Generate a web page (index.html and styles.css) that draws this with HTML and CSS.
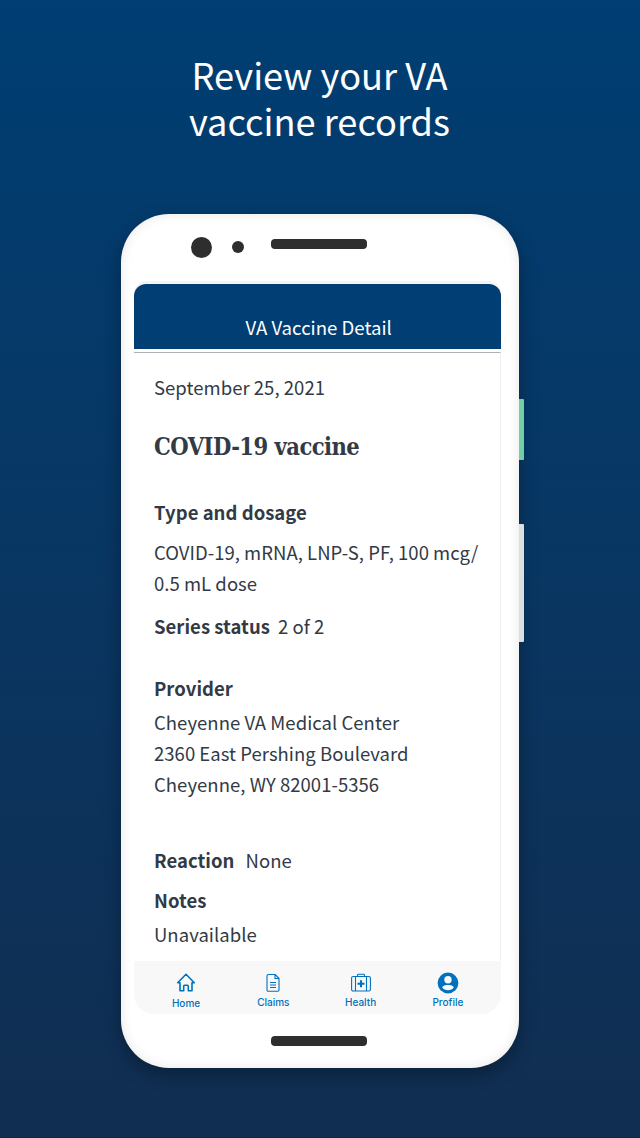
FILE: index.html
```html
<!DOCTYPE html>
<html lang="en">
<head>
<meta charset="utf-8">
<title>VA Vaccine Detail</title>
<link rel="stylesheet" href="styles.css">
</head>
<body>
<main class="poster">
  <h1 class="headline">Review your VA<br>vaccine records</h1>
  <div class="phone">
    <i class="side-button power"></i>
    <i class="side-button volume"></i>
    <div class="sensors"><i class="camera"></i><i class="sensor"></i><i class="speaker"></i></div>
    <section class="screen">
      <header class="app-bar">VA Vaccine Detail</header>
      <article class="record">
        <p class="date">September 25, 2021</p>
        <h2 class="vaccine">COVID-19 vaccine</h2>
        <h3 class="label type">Type and dosage</h3>
        <p class="dosage">COVID-19, mRNA, LNP-S, PF, 100 mcg/<br>0.5 mL dose</p>
        <p class="series"><b class="label">Series status</b><span>2 of 2</span></p>
        <h3 class="label provider">Provider</h3>
        <p class="address">Cheyenne VA Medical Center<br>2360 East Pershing Boulevard<br>Cheyenne, WY 82001-5356</p>
        <p class="reaction"><b class="label">Reaction</b><span>None</span></p>
        <h3 class="label notes">Notes</h3>
        <p class="note-text">Unavailable</p>
      </article>
      <nav class="tabs">
        <a class="tab home">
          <svg width="20" height="20" viewBox="0 0 20 20" fill="none" stroke="currentColor" stroke-width="1.6" stroke-linejoin="round" stroke-linecap="round"><path d="M4 9.700H1.700L10 1.300l8.300 8.400H16v8.100h-3.700v-4.600a1 1 0 0 0-1-1H8.700a1 1 0 0 0-1 1v4.600H4z"/></svg>
          <span>Home</span>
        </a>
        <a class="tab">
          <svg width="20" height="20" viewBox="0 0 20 20" fill="none" stroke="currentColor" stroke-width="1.1"><path d="M5.500 1.500h6.700l3.800 3.800v11.700a1.200 1.200 0 0 1-1.200 1.200H5.200A1.200 1.200 0 0 1 4 17V3a1.500 1.500 0 0 1 1.500-1.500zM12 1.700v3.800h3.800M7 9.500h6M7 12h6M7 14.500h6"/></svg>
          <span>Claims</span>
        </a>
        <a class="tab">
          <svg width="20" height="20" viewBox="0 0 20 20" fill="none" stroke="currentColor" stroke-width="1.1"><rect x=".6" y="3.500" width="18.800" height="14.500" rx="1.500"/><path d="M4.500 3.500V18M15.500 3.500V18M6.500 3.500V2.200c0-.5.400-.9.900-.9h5.200c.5 0 .9.400.9.900v1.300"/><path d="M10 7.200v7M6.500 10.700h7" stroke-width="2.100"/></svg>
          <span>Health</span>
        </a>
        <a class="tab">
          <svg class="profile-icon" width="22" height="22" viewBox="0 0 22 22"><circle cx="11" cy="11" r="10.400" fill="currentColor"/><circle cx="11" cy="7.800" r="3.700" fill="#f8f8f8"/><path d="M5.200 15.600c.6-2 3.200-2.600 5.800-2.600s5.200.6 5.800 2.600c-1.300 1.700-3.400 2.700-5.800 2.700s-4.500-1-5.800-2.700z" fill="#f8f8f8"/></svg>
          <span>Profile</span>
        </a>
      </nav>
    </section>
    <i class="speaker bottom"></i>
  </div>
</main>
</body>
</html>
```
FILE: styles.css
```css
* { box-sizing: border-box; }
body { margin: 0; }
h1, h2, h3, p { margin: 0; }

.poster {
  height: 1138px;
  display: flex;
  flex-direction: column;
  align-items: center;
  overflow: hidden;
  background: linear-gradient(#003e73, #112e51);
  border-bottom: 1px solid #0d2743;
  font-family: "Noto Sans CJK SC", "Noto Sans", sans-serif;
}
.headline {
  margin-top: 51px;
  padding-right: 1px;
  color: #fff;
  font-size: 36.200px;
  line-height: 46px;
  font-weight: 400;
  text-align: center;
}
.phone {
  position: relative;
  width: 398px;
  height: 854px;
  flex: none;
  margin-top: 71px;
  padding: 0 18px 0 13.400px;
  display: flex;
  flex-direction: column;
  border-radius: 48px;
  background: #fff;
  box-shadow: inset 0 0 12px rgba(0, 0, 0, .1), 0 7px 16px rgba(5, 20, 35, .5);
}
.side-button {
  position: absolute;
  left: 398px;
  width: 5px;
  border-radius: 0 1px 1px 0;
}
.power { top: 185px; height: 61px; background: #71cfa8; }
.volume { top: 310px; height: 118px; background: #dcdfe0; }

.sensors { height: 70px; padding: 22.500px 0 0 56.600px; display: flex; align-items: flex-start; }
.camera, .sensor, .speaker { background: #2e2e2e; }
.camera { width: 21px; height: 21px; border-radius: 50%; }
.sensor { width: 12px; height: 12px; border-radius: 50%; margin: 4.500px 0 0 20px; }
.sensors .speaker { margin: 2.500px 0 0 27px; }
.speaker { width: 96px; height: 9.500px; border-radius: 4px; }
.speaker.bottom { margin: 22px 0 0 136.600px; }

.screen {
  width: 366.600px;
  height: 730px;
  display: flex;
  flex-direction: column;
  border-radius: 12px 12px 20px 20px;
  overflow: hidden;
  background: #fff;
  box-shadow: 0 -3px 0 #f4f4f4;
}
.app-bar {
  height: 65.400px;
  flex: none;
  padding-top: 27px;
  padding-left: 2px;
  background: #003e73;
  color: #fff;
  font-size: 18.600px;
  line-height: 31px;
  text-align: center;
}
.record {
  height: 609px;
  flex: none;
  margin-top: 2.600px;
  padding: 19px 0 0 19.600px;
  border-top: 1px solid #aeb0b5;
  border-right: 1px solid #f0f0f0;
  color: #323a45;
  font-size: 18.500px;
  letter-spacing: .035px;
  line-height: 31px;
  white-space: nowrap;
}
.label { font-size: 18.500px; font-weight: 700; }
.vaccine {
  margin-top: 29px;
  font: 700 23.500px/31px "DejaVu Serif Condensed", "DejaVu Serif", serif;
  letter-spacing: -.55px;
}
.type { margin-top: 34px; }
.dosage { margin-top: 9px; }
.series { margin-top: 12px; display: flex; gap: 8px; }
.provider { margin-top: 31px; }
.address { margin-top: 3px; }
.reaction { margin-top: 45px; display: flex; gap: 11px; }
.notes { margin-top: 9px; }
.note-text { margin-top: 3px; }

.tabs {
  flex: 1;
  display: flex;
  padding: 12px 9.500px 0 8px;
  background: #f8f8f8;
  color: #0071bc;
  font: 500 10px/12px Inter, sans-serif;
}
.tab { flex: 1; display: flex; flex-direction: column; align-items: center; gap: 3px; }
.tab.home { gap: 4px; }
.profile-icon { margin: -1px; }
```
